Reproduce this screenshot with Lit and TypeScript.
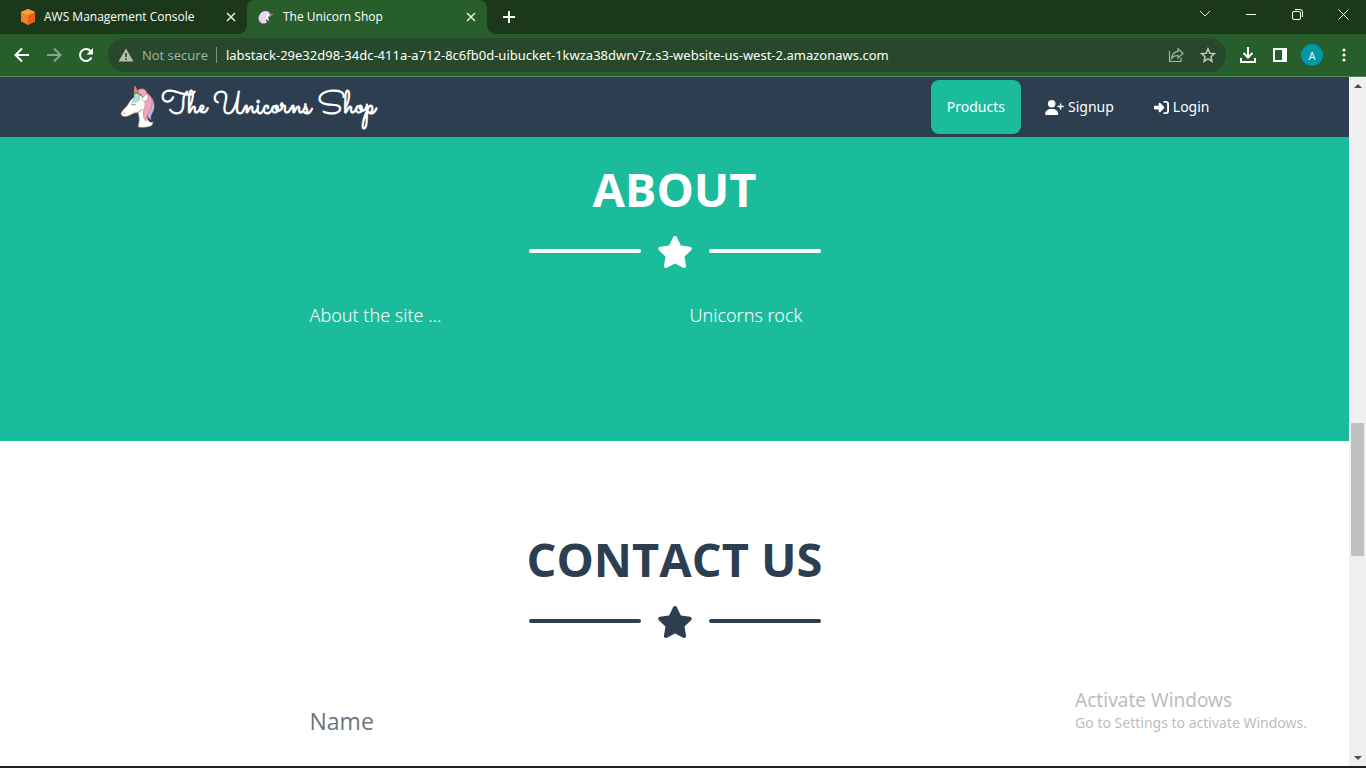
import { LitElement, html, css, svg } from "lit";
import { customElement } from "lit/decorators.js";

const STAR =
  "M259.3 17.8L194 150.2 47.9 171.5c-26.2 3.8-36.7 36.1-17.7 54.6l105.7 103-25 145.5c-4.5 26.3 23.2 46 46.4 33.7L288 439.6l130.7 68.7c23.2 12.2 50.9-7.4 46.4-33.7l-25-145.5 105.7-103c19-18.5 8.5-50.8-17.7-54.6L382 150.2 316.7 17.8c-11.7-23.6-45.6-23.9-57.4 0z";
const USER_PLUS =
  "M96 128a128 128 0 1 1 256 0A128 128 0 1 1 96 128zM0 482.3C0 383.8 79.8 304 178.3 304l91.4 0C368.2 304 448 383.8 448 482.3c0 16.4-13.3 29.7-29.7 29.7L29.7 512C13.3 512 0 498.7 0 482.3zM504 312l0-64-64 0c-13.3 0-24-10.7-24-24s10.7-24 24-24l64 0 0-64c0-13.3 10.7-24 24-24s24 10.7 24 24l0 64 64 0c13.3 0 24 10.7 24 24s-10.7 24-24 24l-64 0 0 64c0 13.3-10.7 24-24 24s-24-10.7-24-24z";
const SIGN_IN =
  "M217.9 105.9L340.7 228.7c7.2 7.2 11.3 17.1 11.3 27.3s-4.1 20.1-11.3 27.3L217.9 406.1c-6.4 6.4-15 9.9-24 9.9c-18.7 0-33.9-15.2-33.9-33.9l0-62.1L32 320c-17.7 0-32-14.3-32-32l0-64c0-17.7 14.3-32 32-32l128 0 0-62.1c0-18.7 15.2-33.9 33.9-33.9c9 0 17.6 3.6 24 9.9zM352 416l64 0c17.7 0 32-14.3 32-32l0-256c0-17.7-14.3-32-32-32l-64 0c-17.7 0-32-14.3-32-32s14.3-32 32-32l64 0c53 0 96 43 96 96l0 256c0 53-43 96-96 96l-64 0c-17.7 0-32-14.3-32-32s14.3-32 32-32z";

const sharedStyles = css`
  * {
    box-sizing: border-box;
  }
  svg {
    display: block;
    flex: none;
  }
  button,
  input {
    margin: 0;
    padding: 0;
    border: 0;
    background: none;
    color: inherit;
    font: inherit;
    outline: none;
  }
  button {
    display: flex;
    align-items: center;
    justify-content: center;
    flex: none;
  }
`;

@customElement("browser-chrome")
export class BrowserChrome extends LitElement {
  static styles = [
    sharedStyles,
    css`
      :host {
        display: block;
        flex: none;
        color: #fff;
        font-family: "Open Sans", "Noto Sans", sans-serif;
        border-bottom: 1px solid #54865a;
      }
      .strip {
        display: flex;
        height: 34px;
        background: #1b381b;
      }
      .tab {
        display: flex;
        align-items: center;
        width: 240px;
        padding: 0 10px;
        gap: 8px;
        font-size: 12px;
        line-height: 16px;
      }
      .tab.first {
        width: 247px;
        padding-left: 20px;
      }
      .tab.active {
        position: relative;
        background: #285e2b;
        border-radius: 8px 8px 0 0;
      }
      .tab.active::before,
      .tab.active::after {
        content: "";
        position: absolute;
        bottom: 0;
        width: 8px;
        height: 8px;
      }
      .tab.active::before {
        right: 100%;
        background: radial-gradient(circle at 0 0, #1b381b 7.5px, #285e2b 8px);
      }
      .tab.active::after {
        left: 100%;
        background: radial-gradient(circle at 100% 0, #1b381b 7.5px, #285e2b 8px);
      }
      .title {
        flex: 1;
        white-space: nowrap;
      }
      .close {
        width: 12px;
        height: 16px;
      }
      .plus {
        width: 44px;
      }
      .window {
        display: flex;
        margin-left: auto;
      }
      .window button {
        width: 46px;
        height: 28px;
      }
      .bar {
        display: flex;
        align-items: center;
        height: 42px;
        padding: 0 11px 0 12px;
        background: #285e2b;
      }
      .history {
        display: flex;
        gap: 12px;
        margin-right: 12px;
      }
      .history button {
        width: 20px;
        height: 20px;
      }
      .dim {
        opacity: 0.45;
      }
      .omnibox {
        display: flex;
        align-items: center;
        flex: 1;
        height: 34px;
        padding: 0 10px;
        border-radius: 17px;
        background: #27482a;
        font-size: 13px;
        line-height: 20px;
      }
      .secure {
        margin: 0 8px;
        color: #a9b5a9;
      }
      .rule {
        width: 1px;
        height: 16px;
        margin-right: 9px;
        background: #7f917f;
      }
      .url {
        flex: 1;
        min-width: 0;
        font-family: "Noto Sans", sans-serif;
      }
      .omnibox button {
        width: 16px;
        height: 16px;
        margin-left: 16px;
      }
      .actions {
        display: flex;
        align-items: center;
        gap: 10px;
        margin-left: 11px;
      }
      .actions button {
        width: 22px;
        height: 22px;
      }
      .actions .avatar {
        border-radius: 50%;
        background: #0097a7;
        font-size: 11px;
      }
    `,
  ];

  private cross() {
    return html`<svg width="10" height="10" viewBox="0 0 10 10">
      <path d="M1 1l8 8M9 1l-8 8" stroke="#e6ece6" stroke-width="1.5" />
    </svg>`;
  }

  render() {
    return html`
      <div class="strip">
        <div class="tab first">
          <svg width="16" height="16" viewBox="0 0 16 16">
            <path d="M8 0l7 3v9.500L8 16l-7-3.500V3z" fill="#f58220" />
            <path d="M8 0l7 3-7 3.500L1 3z" fill="#f9a03c" />
            <path d="M8 6.500L15 3v9.500L8 16z" fill="#e8601a" />
          </svg>
          <span class="title">AWS Management Console</span>
          <button class="close" aria-label="Close tab">${this.cross()}</button>
        </div>
        <div class="tab active">
          <svg width="18" height="16" viewBox="0 0 18 16">
            <path d="M8 8l2 5 3 2-1-7z" fill="#4a5548" />
            <path d="M9 4l8 1-6 4z" fill="#8d8291" />
            <path d="M3 5C5 2 9 1 12 3l1 3-3 1-1 4 1 2c-2 2-5 2-7 0-2-2-2-5 0-8z" fill="#efd2f0" />
            <path d="M9 5l4 1-2 2 1 4-3-2z" fill="#f8f2fa" />
          </svg>
          <span class="title">The Unicorn Shop</span>
          <button class="close" aria-label="Close tab">${this.cross()}</button>
        </div>
        <button class="plus" aria-label="New tab">
          <svg width="12" height="12" viewBox="0 0 12 12">
            <path d="M6 0v12M0 6h12" stroke="#fff" stroke-width="2" />
          </svg>
        </button>
        <div class="window">
          <button aria-label="Search tabs">
            <svg width="12" height="8" viewBox="0 0 12 8">
              <path d="M1 1l5 5 5-5" fill="none" stroke="#e0e6e0" />
            </svg>
          </button>
          <button aria-label="Minimize">
            <svg width="10" height="10" viewBox="0 0 10 10">
              <path d="M0 5.500h10" stroke="#fff" />
            </svg>
          </button>
          <button aria-label="Restore">
            <svg width="11" height="11" viewBox="0 0 11 11">
              <rect x=".5" y="2.500" width="8" height="8" rx="1.500" fill="none" stroke="#fff" />
              <path d="M3 .5h5a2.500 2.500 0 0 1 2.500 2.500v5" fill="none" stroke="#fff" />
            </svg>
          </button>
          <button aria-label="Close">
            <svg width="11" height="11" viewBox="0 0 11 11">
              <path d="M.5.5l10 10M10.500.5l-10 10" stroke="#fff" />
            </svg>
          </button>
        </div>
      </div>
      <div class="bar">
        <div class="history">
          <button aria-label="Back">
            <svg width="16" height="16" viewBox="0 0 16 16">
              <path d="M15 8H2M8 1.500L1.500 8 8 14.500" fill="none" stroke="#fff" stroke-width="2" />
            </svg>
          </button>
          <button class="dim" aria-label="Forward">
            <svg width="16" height="16" viewBox="0 0 16 16">
              <path d="M1 8h13M8 1.500L14.500 8 8 14.500" fill="none" stroke="#fff" stroke-width="2" />
            </svg>
          </button>
          <button aria-label="Reload">
            <svg width="16" height="16" viewBox="0 0 16 16">
              <path d="M13.500 10.500A6 6 0 1 1 12.500 4" fill="none" stroke="#fff" stroke-width="2" />
              <path d="M15 1v6.500H8.500z" fill="#fff" />
            </svg>
          </button>
        </div>
        <div class="omnibox">
          <svg width="16" height="16" viewBox="0 0 16 16">
            <path d="M8 1.500L15.500 14.500H.5z" fill="#b4bcb4" />
            <path d="M8 6v4M8 11.200v1.800" stroke="#27482a" stroke-width="1.600" />
          </svg>
          <span class="secure">Not secure</span>
          <span class="rule"></span>
          <input
            class="url"
            type="text"
            aria-label="Address"
            readonly
            value="labstack-29e32d98-34dc-411a-a712-8c6fb0d-uibucket-1kwza38dwrv7z.s3-website-us-west-2.amazonaws.com"
          />
          <button aria-label="Share">
            <svg width="16" height="16" viewBox="0 0 16 16">
              <path
                d="M1.500 4v10.500H13V11M10 1.800L15 6.500l-5 4.500V8.500C7 8.300 5 9.500 3.500 11.500 4 7.500 6 4.800 10 4.300z"
                fill="none"
                stroke="#a9b5a9"
                stroke-width="1.200"
              />
            </svg>
          </button>
          <button aria-label="Bookmark">
            <svg width="16" height="16" viewBox="0 0 16 16">
              <path
                d="M8 1.800l1.800 4.400 4.700.4-3.600 3.100 1.100 4.600L8 11.800l-4 2.500 1.100-4.600L1.500 6.600l4.700-.4z"
                fill="none"
                stroke="#c2cac2"
                stroke-width="1.500"
              />
            </svg>
          </button>
        </div>
        <div class="actions">
          <button aria-label="Downloads">
            <svg width="16" height="16" viewBox="0 0 16 16">
              <path d="M8 0v10M3.500 6L8 10.500 12.500 6M1 11v4h14v-4" fill="none" stroke="#fff" stroke-width="2" />
            </svg>
          </button>
          <button aria-label="Side panel">
            <svg width="14" height="14" viewBox="0 0 14 14">
              <path d="M0 0h14v14H0zM2 2v10h7V2z" fill="#fff" fill-rule="evenodd" />
            </svg>
          </button>
          <button class="avatar" aria-label="Profile">A</button>
          <button aria-label="Menu">
            <svg width="4" height="14" viewBox="0 0 4 14">
              <circle cx="2" cy="2" r="1.600" fill="#fff" />
              <circle cx="2" cy="7" r="1.600" fill="#fff" />
              <circle cx="2" cy="12" r="1.600" fill="#fff" />
            </svg>
          </button>
        </div>
      </div>
    `;
  }
}

@customElement("shop-nav")
export class ShopNav extends LitElement {
  static styles = [
    sharedStyles,
    css`
      :host {
        display: block;
        background: #2c3e50;
        color: #fff;
      }
      .inner {
        display: flex;
        align-items: center;
        max-width: 1140px;
        height: 60px;
        margin: 0 auto;
        padding: 0 15px;
      }
      a {
        color: inherit;
        text-decoration: none;
      }
      .brand {
        display: flex;
        align-items: center;
        gap: 6px;
        font-family: "Sacramento", cursive;
        font-size: 30px;
        font-weight: 700;
        line-height: 40px;
        white-space: nowrap;
      }
      .links {
        display: flex;
        margin: 0 0 0 auto;
        padding: 0;
        list-style: none;
        gap: 8px;
        padding-right: 4px;
      }
      .link {
        display: flex;
        align-items: center;
        gap: 4px;
        padding: 15px 16px;
        border-radius: 8px;
        font-family: "Noto Sans", sans-serif;
        font-size: 14px;
        line-height: 24px;
      }
      .link.active {
        background: #1abc9c;
      }
    `,
  ];

  render() {
    return html`
      <nav class="inner">
        <a class="brand" href="#top">
          <svg width="36" height="44" viewBox="0 0 36 44">
            <path
              d="M26 9c7 2 9 9 8 15-1 4-4 6-3 11-4-3-6-8-5-13z"
              fill="#c9b5e8"
              stroke="#8d6f86"
              stroke-width=".5"
            />
            <path
              d="M13 13C9 16 9 19 6 22C3 25 1 27 1 29C2 32 5 32 8 31C12 30 13 27 18 28C20 33 19 38 18 42C23 43 28 42 31 41C33 39 33 38 33 37C30 38 27 36 27 30L27 15L20 10z"
              fill="#fff"
              stroke="#a87c6a"
              stroke-width=".6"
            />
            <path
              d="M18 5c5-3 8 0 9 3 6 4 6 10 4 15-1 4-5 7-5 13-4-4-3-11-1-15 1-7-3-11-7-13z"
              fill="#f0a9bc"
              stroke="#a8606f"
              stroke-width=".5"
            />
            <path
              d="M14 9c4-2 6 0 6 4 0 4-2 4-5 4-1 1-2 1-3 1 0-3 3-4 2-9z"
              fill="#a9e3d4"
              stroke="#6fa99c"
              stroke-width=".3"
            />
            <path d="M14 8l1-7 3 6z" fill="#e08aa0" stroke="#b78a3e" stroke-width=".8" />
            <path d="M22 14l5-6 1 6-4 3z" fill="#fff" stroke="#b28a86" stroke-width=".6" />
            <path d="M11 19q3 2 5 0M3 29l2-1M17 28q3-1 5-4" fill="none" stroke="#725a55" stroke-width=".7" />
          </svg>
          <span>The Unicorns Shop</span>
        </a>
        <ul class="links">
          <li><a class="link active" href="#products">Products</a></li>
          <li>
            <a class="link" href="#signup">
              <svg width="19" height="15" viewBox="0 0 640 512"><path d=${USER_PLUS} fill="#fff" /></svg>
              Signup
            </a>
          </li>
          <li>
            <a class="link" href="#login">
              <svg width="15" height="15" viewBox="0 0 512 512"><path d=${SIGN_IN} fill="#fff" /></svg>
              Login
            </a>
          </li>
        </ul>
      </nav>
    `;
  }
}

@customElement("shop-page")
export class ShopPage extends LitElement {
  static styles = [
    sharedStyles,
    css`
      :host {
        display: block;
        flex: 1;
        min-width: 0;
        overflow: hidden;
        background: #fff;
      }
      .section {
        padding: 22px 0 111px;
      }
      .about {
        background: #1abc9c;
        color: #fff;
      }
      .contact {
        color: #2c3e50;
        padding-top: 88px;
      }
      h2 {
        margin: 0;
        font-size: 47px;
        font-weight: 700;
        line-height: 60px;
        text-align: center;
        text-transform: uppercase;
      }
      .divider {
        display: flex;
        align-items: center;
        justify-content: center;
        gap: 16px;
        margin: 17px 0 32px;
      }
      .line {
        width: 112px;
        height: 4px;
        margin-bottom: 2px;
        border-radius: 4px;
        background: currentColor;
      }
      .columns,
      form {
        max-width: 760px;
        margin: 0 auto;
      }
      .columns {
        display: grid;
        grid-template-columns: 1fr 1fr;
      }
      .columns p {
        margin: 0;
        padding: 0 15px;
        font-family: "Noto Sans", sans-serif;
        font-size: 18px;
        font-weight: 300;
        line-height: 30px;
      }
      form {
        padding: 0 15px;
      }
      .field {
        width: 100%;
        height: 102px;
        border-bottom: 1px solid #e9ecef;
        font-size: 23px;
      }
      .field::placeholder {
        color: #6c757d;
        opacity: 1;
      }
    `,
  ];

  private divider() {
    return html`<div class="divider">
      <span class="line"></span>
      <svg width="36" height="32" viewBox="0 0 576 512">${svg`<path d=${STAR} fill="currentColor" />`}</svg>
      <span class="line"></span>
    </div>`;
  }

  render() {
    return html`
      <shop-nav></shop-nav>
      <section class="section about">
        <h2>About</h2>
        ${this.divider()}
        <div class="columns">
          <p>About the site ...</p>
          <p>Unicorns rock</p>
        </div>
      </section>
      <section class="section contact">
        <h2>Contact us</h2>
        ${this.divider()}
        <form>
          <input class="field" type="text" aria-label="Name" placeholder="Name" />
        </form>
      </section>
    `;
  }
}

@customElement("app-root")
export class AppRoot extends LitElement {
  static styles = [
    sharedStyles,
    css`
      :host {
        display: flex;
        flex-direction: column;
        position: relative;
        height: 100vh;
        overflow: hidden;
        font-family: "Open Sans", "Noto Sans", sans-serif;
        border-bottom: 2px solid #202124;
        box-sizing: border-box;
      }
      .view {
        display: flex;
        flex: 1;
        min-height: 0;
      }
      .scroll {
        display: flex;
        flex-direction: column;
        flex: none;
        width: 17px;
        background: #f0f0f0;
      }
      .scroll button {
        height: 17px;
      }
      .track {
        display: grid;
        grid-template-rows: 329fr 133fr 193fr;
        flex: 1;
        padding: 0 2px;
      }
      .thumb {
        grid-row: 2;
        background: #c1c1c1;
      }
      .watermark {
        position: absolute;
        right: 59px;
        bottom: 33px;
        color: #bdbdbd;
        font-family: "Noto Sans", sans-serif;
        font-size: 14px;
        line-height: 20px;
        pointer-events: none;
      }
      .watermark strong {
        display: block;
        font-size: 19px;
        font-weight: 400;
        line-height: 26px;
      }
    `,
  ];

  render() {
    return html`
      <browser-chrome></browser-chrome>
      <div class="view">
        <shop-page></shop-page>
        <div class="scroll">
          <button aria-label="Scroll up">
            <svg width="8" height="4" viewBox="0 0 8 4"><path d="M0 4l4-4 4 4z" fill="#505050" /></svg>
          </button>
          <div class="track"><span class="thumb"></span></div>
          <button aria-label="Scroll down">
            <svg width="8" height="4" viewBox="0 0 8 4"><path d="M0 0l4 4 4-4z" fill="#505050" /></svg>
          </button>
        </div>
      </div>
      <div class="watermark"><strong>Activate Windows</strong>Go to Settings to activate Windows.</div>
    `;
  }
}
